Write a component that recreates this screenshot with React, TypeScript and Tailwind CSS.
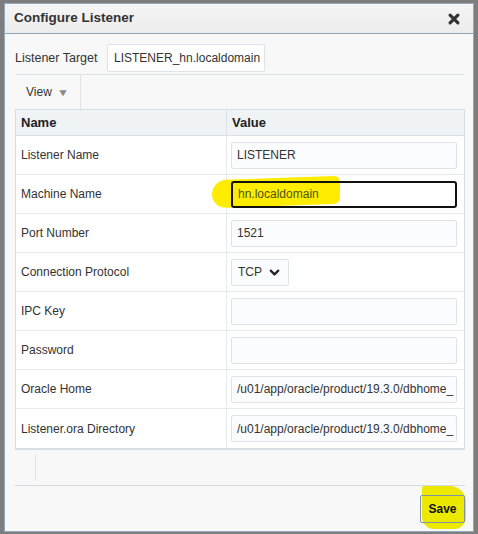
import { IoClose } from "react-icons/io5";
import { FiChevronDown } from "react-icons/fi";

type Row = {
    label: string;
    value?: string;
    kind?: "text" | "select" | "focus";
};

const rows: Row[] = [
    { label: "Listener Name", value: "LISTENER" },
    { label: "Machine Name", value: "hn.localdomain", kind: "focus" },
    { label: "Port Number", value: "1521" },
    { label: "Connection Protocol", value: "TCP", kind: "select" },
    { label: "IPC Key", value: "" },
    { label: "Password", value: "" },
    { label: "Oracle Home", value: "/u01/app/oracle/product/19.3.0/dbhome_" },
    { label: "Listener.ora Directory", value: "/u01/app/oracle/product/19.3.0/dbhome_" },
];

const ValueCell = ({ row }: { row: Row }) => {
    if (row.kind === "select") {
        return (
            <div className="flex items-center justify-between w-[58px] h-[27px] px-[6px] bg-[#fbfcfd] border border-[#dde3e8] rounded-[2px] text-[#333]">
                <span>{row.value}</span>
                <FiChevronDown className="text-[15px] text-[#222]" strokeWidth={3.5} />
            </div>
        );
    }

    if (row.kind === "focus") {
        return (
            <div className="relative w-[226px] h-[27px]">
                {/* highlighter mark */}
                <div className="absolute left-[-19px] top-[-3px] w-[128px] h-[28px] bg-[#ffec00] rounded-l-[14px] rounded-r-[6px] -skew-y-2" />
                <div className="relative flex items-center w-full h-full px-[5px] border-2 border-[#111] rounded-[3px] text-[#4a5410] overflow-hidden whitespace-nowrap">
                    {row.value}
                </div>
            </div>
        );
    }

    return (
        <div className="flex items-center w-[226px] h-[27px] px-[5px] bg-[#fbfcfd] border border-[#dde3e8] rounded-[2px] text-[#333] overflow-hidden whitespace-nowrap">
            {row.value}
        </div>
    );
};

const App = () => {
    return (
        <div
            className="w-[478px] h-[534px] bg-[#7e7e7e] pt-[3px] pl-[4px] pr-[4px] pb-[2px] overflow-hidden"
            style={{ fontFamily: '"Liberation Sans", Arial, sans-serif' }}
        >
            <div className="w-[470px] h-[529px] flex flex-col border border-[#93a8bd] bg-[#f8f8f8]">

                {/* header */}
                <div className="flex items-center justify-between h-[30px] shrink-0 pl-[9px] pr-[10px] bg-gradient-to-b from-[#f5f5f5] to-[#ececec] border-b border-[#8fa4b8]">
                    <span className="text-[13.5px] font-bold text-[#333]">Configure Listener</span>
                    <IoClose className="text-[18px] text-[#333]" strokeWidth={40} />
                </div>

                {/* body */}
                <div className="flex flex-col flex-1 pl-[10px] pr-[8px]">

                    {/* target */}
                    <div className="flex items-center h-[28px] mt-[10px] text-[#333]">
                        <span className="w-[92px] text-[12.5px]">Listener Target</span>
                        <div className="flex items-center w-[158px] h-[28px] px-[6px] bg-white border border-[#e0e4e8] rounded-[2px] text-[12px]">
                            LISTENER_hn.localdomain
                        </div>
                    </div>

                    {/* toolbar */}
                    <div className="flex h-[35px] mt-[2px] border-t border-[#dde3e9]">
                        <div className="flex items-center gap-[6px] w-[66px] pl-[11px] border-r border-[#dde3e9] text-[12px] text-[#333]">
                            View
                            <span className="text-[10px] text-[#8a8a8a] scale-x-125">▼</span>
                        </div>
                    </div>

                    {/* table */}
                    <div className="border-x border-t border-b-2 border-[#d6dee6] bg-white text-[12px]">
                        <div className="flex h-[26px] bg-[#f0f3f6] border-b border-[#d9e0e6] text-[13px] font-bold text-[#222]">
                            <div className="flex items-center w-[211px] pl-[5px] border-r border-[#d9e0e6]">Name</div>
                            <div className="flex items-center pl-[5px]">Value</div>
                        </div>
                        {rows.map((row, i) => (
                            <div
                                key={row.label}
                                className={`flex h-[39px] ${i < rows.length - 1 ? "border-b border-[#e6eaee]" : ""}`}
                            >
                                <div className="flex items-center w-[211px] pl-[5px] border-r border-[#e6eaee] text-[#333]">
                                    {row.label}
                                </div>
                                <div className="flex items-center pl-[4px]">
                                    <ValueCell row={row} />
                                </div>
                            </div>
                        ))}
                    </div>

                    {/* status bar */}
                    <div className="flex h-[36px] border-b border-[#d3dce5]">
                        <div className="w-[21px] mt-[4px] mb-[4px] border-r border-[#dde3e9]" />
                    </div>

                    {/* footer */}
                    <div className="flex justify-end pt-[9px]">
                        <div className="relative">
                            {/* highlighter mark */}
                            <div className="absolute left-[2px] top-[-9px] w-[44px] h-[43px] bg-[#ede800] rounded-tl-[2px] rounded-tr-[16px] rounded-b-[12px]" />
                            <button className="relative w-[45px] h-[28px] border border-[#7f93a6] rounded-[2px] text-[12px] font-bold text-[#111]">
                                Save
                            </button>
                        </div>
                    </div>

                </div>
            </div>
        </div>
    );
};

export default App;
